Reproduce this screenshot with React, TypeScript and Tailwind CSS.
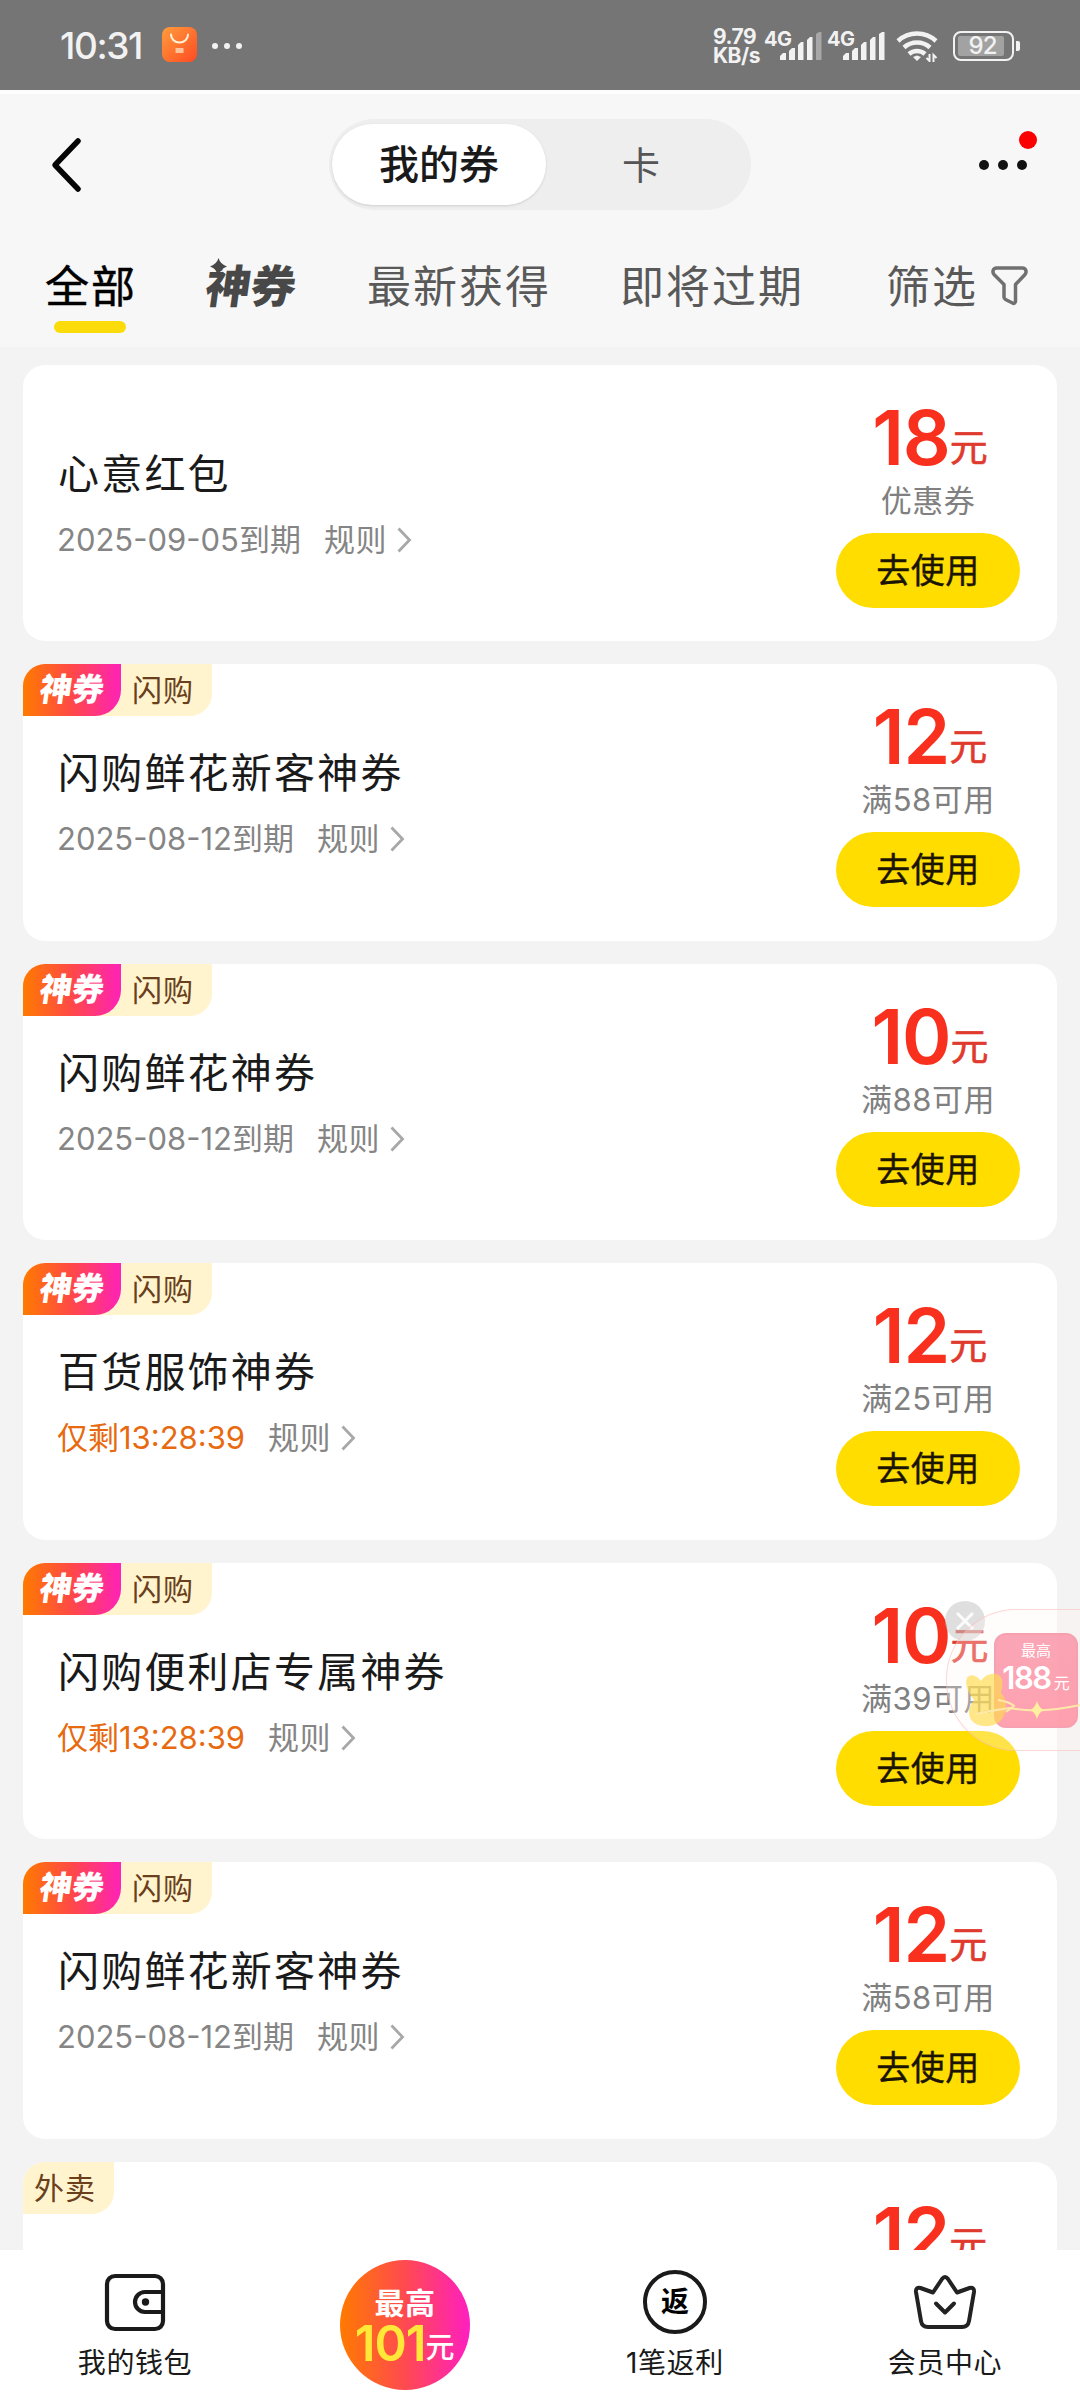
import clsx from 'clsx';

interface Coupon {
  title: string;
  expire: string;
  urgent?: boolean;
  amount: number;
  condition: string;
  god?: boolean;
  tag?: string;
}

const coupons: Coupon[] = [
  { title: '心意红包', expire: '2025-09-05到期', amount: 18, condition: '优惠券' },
  { title: '闪购鲜花新客神券', expire: '2025-08-12到期', amount: 12, condition: '满58可用', god: true, tag: '闪购' },
  { title: '闪购鲜花神券', expire: '2025-08-12到期', amount: 10, condition: '满88可用', god: true, tag: '闪购' },
  { title: '百货服饰神券', expire: '仅剩13:28:39', urgent: true, amount: 12, condition: '满25可用', god: true, tag: '闪购' },
  { title: '闪购便利店专属神券', expire: '仅剩13:28:39', urgent: true, amount: 10, condition: '满39可用', god: true, tag: '闪购' },
  { title: '闪购鲜花新客神券', expire: '2025-08-12到期', amount: 12, condition: '满58可用', god: true, tag: '闪购' },
  { title: '', expire: '', amount: 12, condition: '', tag: '外卖' },
];

function Signal({ weak = false }: { weak?: boolean }) {
  return (
    <svg width="42" height="28" viewBox="0 0 42 28" fill="#f2f2f2">
      <path d="M0 24l3-3h3v7H0z" />
      <path d="M9 19l3-3h3v12H9z" />
      <path d="M18 13l3-3h2.500v18H18z" />
      <path d="M27 8l3-3h2.500v23H27z" />
      <path d="M36 2l3-2h2.500v28H36z" opacity={weak ? 0.4 : 1} />
    </svg>
  );
}

function StatusBar() {
  return (
    <div className="flex h-[90px] flex-shrink-0 items-center bg-[#757575] px-[60px] pb-px text-[#f2f2f2]">
      <span className="w-[84px] pt-[2px] text-[37px] font-medium leading-none tracking-[-1.400px]">10:31</span>
      <svg className="ml-[18px]" width="35" height="35" viewBox="0 0 35 35">
        <defs>
          <linearGradient id="store" x1="0" y1="0" x2="1" y2="1">
            <stop offset="0" stopColor="#ff9d3c" />
            <stop offset="1" stopColor="#ff4a22" />
          </linearGradient>
        </defs>
        <rect width="35" height="35" rx="8" fill="url(#store)" />
        <path d="M9 7.500a8.500 8 0 0 0 17 0" fill="none" stroke="#fff0d8" strokeWidth="2" strokeLinecap="round" />
        <rect x="13.500" y="21" width="8" height="5" fill="#ffc39c" />
      </svg>
      <div className="ml-[15px] flex gap-[6px] pt-[2px]">
        <i className="size-[6px] rounded-full bg-[#f2f2f2]" />
        <i className="size-[6px] rounded-full bg-[#f2f2f2]" />
        <i className="size-[6px] rounded-full bg-[#f2f2f2]" />
      </div>

      <div className="ml-auto flex items-center pt-[2px]">
        <div className="w-[50px] text-[21px] font-bold leading-[19px] tracking-[-0.5px]">
          <p className="h-[19px]">9.79</p>
          <p className="h-[19px]">KB/s</p>
        </div>
        <div className="ml-px flex h-[32px]">
          <span className="w-[16px] text-[20px] font-bold leading-[18px] tracking-[-0.5px]">4G</span>
          <span className="mt-[2px]"><Signal weak /></span>
        </div>
        <div className="ml-[5px] flex h-[32px]">
          <span className="w-[16px] text-[20px] font-bold leading-[18px] tracking-[-0.5px]">4G</span>
          <span className="mt-[2px]"><Signal /></span>
        </div>
        <svg className="ml-[11px]" width="43" height="33" viewBox="0 0 43 33" fill="none" stroke="#f2f2f2" strokeWidth="4.500">
          <path d="M2 12a28 28 0 0 1 38 0" />
          <path d="M8 18.500a19.500 19.500 0 0 1 26 0" />
          <path d="M13 25a12 12 0 0 1 16 0" />
          <path d="M17 28l4-1.500 4 1.500-4 4z" fill="#f2f2f2" stroke="none" />
          <path d="M33.500 25v7l-3-3M37.500 33v-7l3 3" strokeWidth="2" />
        </svg>
        <div className="ml-[14px] flex items-center">
          <div className="flex h-[30px] w-[61px] items-center rounded-[8px] border-[2.500px] border-[#f2f2f2] p-[3px]">
            <span className="flex h-full w-[46px] items-center justify-center rounded-[2px] bg-[#a2a2a2] pl-[3px] text-[24px] font-medium leading-none tracking-[-1px]">92</span>
          </div>
          <i className="ml-[2px] h-[10px] w-[4px] rounded-r-[2px] bg-[#f2f2f2]" />
        </div>
      </div>
    </div>
  );
}

function Header() {
  return (
    <header className="flex h-[149px] items-center border-t-4 border-[#fdfdfd] pb-[4px] pl-[50px]">
      <svg width="34" height="56" viewBox="0 0 34 56" fill="none" stroke="#050505" strokeWidth="5.500" strokeLinecap="round" strokeLinejoin="round">
        <path d="M28 4L5 28l23 24" />
      </svg>
      <div className="ml-[245px] flex h-[91px] w-[422px] items-center rounded-full bg-[#eeeeee] pl-[3px]">
        <div className="flex h-[81px] w-[214px] items-center justify-center rounded-full bg-white text-[40px] font-medium leading-none text-[#1a1a1a] shadow-sm">
          我的券
        </div>
        <div className="ml-[76px] text-[38px] leading-none text-[#555]">卡</div>
      </div>
      <div className="relative ml-[228px] flex gap-[9px]">
        <i className="size-[10px] rounded-full bg-[#111]" />
        <i className="size-[10px] rounded-full bg-[#111]" />
        <i className="size-[10px] rounded-full bg-[#111]" />
        <i className="absolute -top-[29px] left-[40px] size-[18px] rounded-full bg-[#fb0000]" />
      </div>
    </header>
  );
}

// stylised coupon wordmark, shared by the tab and the card badge
function GodCoupon({ small = false }: { small?: boolean }) {
  return (
    <span className="relative inline-block">
      <span
        className={clsx(
          'inline-block -skew-x-8 font-black leading-none',
          small ? 'text-[32px] text-white' : 'text-[45px] text-[#484848]',
        )}
      >
        神券
      </span>
      <svg
        className={clsx('absolute', small ? '-top-[1px] left-[3px] size-[12px]' : '-top-[6px] left-[4px] size-[17px]')}
        viewBox="0 0 16 16"
        fill={small ? '#fff' : '#484848'}
      >
        <path d="M8 0q1.500 5.500 8 8-6.500 2.500-8 8-1.500-5.500-8-8 6.500-2.500 8-8z" />
      </svg>
    </span>
  );
}

function Tabs() {
  return (
    <nav className="flex h-[108px] pl-[45px] pt-[25px] text-[44px] leading-[46px] tracking-[2px] text-[#595959]">
      <div className="flex w-[90px] flex-col items-center text-black">
        <span className="whitespace-nowrap pl-[2px] [-webkit-text-stroke:0.5px]">全部</span>
        <i className="mt-[11px] h-[12px] w-[72px] rounded-full bg-[#fbdc0a]" />
      </div>
      <div className="ml-[71px] w-[92px] tracking-normal">
        <GodCoupon />
      </div>
      <div className="ml-[69px] w-[184px]">最新获得</div>
      <div className="ml-[69px] w-[184px]">即将过期</div>
      <div className="ml-[82px] flex">
        <span>筛选</span>
        <svg className="ml-[13px] mt-px" width="38" height="42" viewBox="0 0 38 42" fill="none" stroke="#707070" strokeWidth="3.500" strokeLinejoin="round">
          <path d="M5.500 3h26c3.500 0 4.500 4 2.500 6.500l-9.500 10V36c0 2-1.500 3-3 2l-7-3.500c-1-.500-1.500-1.500-1.500-2.500V19.500L3 9.500C1 7 2 3 5.500 3z" />
        </svg>
      </div>
    </nav>
  );
}

function CouponCard({ coupon }: { coupon: Coupon }) {
  const { title, expire, urgent, amount, condition, god, tag } = coupon;

  return (
    <div className="flex h-[276.500px] flex-shrink-0 overflow-hidden rounded-[22px] bg-white">
      <div className="flex-1">
        {/* Badges */}
        <div className="flex h-[52px]">
          {tag && (
            <div
              className={clsx(
                'flex h-[52px] items-center rounded-br-[22px] bg-[#fff4ce] text-[30px] leading-none tracking-[1px] text-[#6a401c]',
                god ? 'w-[189px]' : 'w-[91px] pl-[11px]',
              )}
            >
              {god && (
                <span className="mr-[11px] flex h-[52px] w-[98px] items-center justify-center rounded-br-[26px] bg-linear-to-r/srgb from-[#ff7a00] via-[#ff4848] to-[#ff22b8] tracking-normal">
                  <GodCoupon small />
                </span>
              )}
              {tag}
            </div>
          )}
        </div>

        <h3 className="ml-[35px] mt-[27px] text-[41px] leading-[60px] tracking-[2.200px] text-[#1a1a1a]">{title}</h3>
        {expire && (
          <div className="ml-[34px] mt-[16px] flex items-center text-[31px] leading-[40px] text-[#858585]">
            <span className={clsx(urgent ? 'tracking-normal text-[#e86a10]' : 'tracking-normal')}>{expire}</span>
            <span className="ml-[23px] tracking-[0.5px]">规则</span>
            <svg className="ml-[10px]" width="15" height="26" viewBox="0 0 15 26" fill="none" stroke="#a8a8a8" strokeWidth="2.800">
              <path d="M1.500 1.500L12.500 13l-11 11.500" />
            </svg>
          </div>
        )}
      </div>

      {/* Amount and action */}
      <div className="mr-[37px] flex w-[184px] flex-col items-center pt-[35px]">
        <div className="flex h-[75px] items-baseline whitespace-nowrap pl-[4px] text-[#f9301e]">
          <span className="text-[75px] font-semibold leading-[75px] tracking-[-1px]">{amount}</span>
          <span className="-translate-y-[4px] text-[38px] leading-none text-[#e03a2e] [-webkit-text-stroke:0.6px]">元</span>
        </div>
        <p className="mt-[8px] text-[31px] leading-[36px] tracking-[0.5px] text-[#808080]">{condition || '\u00a0'}</p>
        <button className="mt-[14px] h-[75px] w-[184px] rounded-full bg-[#ffdd00] pt-px text-[34px] leading-none tracking-[0.500px] text-[#1a1400] [-webkit-text-stroke:0.4px]">
          去使用
        </button>
      </div>
    </div>
  );
}

function FloatingPromo() {
  return (
    <div className="absolute right-0 top-[1600px] h-[152px] w-[134px]">
      <svg className="absolute -left-px top-0" width="40" height="42" viewBox="0 0 40 42">
        <circle cx="20" cy="21" r="20" fill="#c4c4c4" opacity="0.55" />
        <path d="M12 13l16 16M28 13L12 29" stroke="#fff" strokeWidth="3" opacity="0.9" />
      </svg>
      <div className="absolute left-0 top-[9px] h-[142px] w-[134px] rounded-l-[70px] border border-r-0 border-[#f5b5b0]/50 bg-[#fff5f3]/30" />
      <div className="absolute left-[48px] top-[33px] flex h-[95px] w-[84px] flex-col items-center rounded-[12px] border-2 border-[#f4a0b0]/60 bg-linear-to-b/srgb from-[#f98fa4]/80 to-[#ff8a9c]/80 pt-[7px] text-white">
        <span className="text-[15px] leading-[18px]">最高</span>
        <span className="mt-[2px] flex items-baseline whitespace-nowrap">
          <span className="text-[31px] font-semibold leading-[32px] tracking-[-1.500px]">188</span>
          <span className="ml-[3px] text-[16px] leading-none">元</span>
        </span>
      </div>
      <svg className="absolute left-[18px] top-[70px]" width="116" height="60" viewBox="0 0 116 60">
        <path
          d="M3 8c3-5 10-3 14 3 3-6 14-10 19-5 4 5 2 12 1 17 5 5 6 13 4 20-3 10-12 14-21 13C9 55 5 49 5 42c0-5 3-9 5-12C5 24 0 14 3 8z"
          fill="#ffdc4a"
          opacity="0.65"
        />
        <path d="M12 44q18-4 34-6 30 6 70-3M34 30q12 2 16 6l-8 6" fill="none" stroke="#ffe9a8" strokeWidth="2" />
        <path d="M73 31q2 7 7 9-5 2-7 9-2-7-7-9 5-2 7-9z" fill="#fff0a0" />
      </svg>
    </div>
  );
}

function BottomNav() {
  return (
    <div className="absolute inset-x-0 bottom-0 grid h-[150px] grid-cols-4 bg-white text-[28px] leading-[36px] tracking-[0.6px] text-[#1a1a1a]">
      <div className="flex flex-col items-center pt-[20px]">
        <svg width="64" height="64" viewBox="0 0 64 64" fill="none" stroke="#1a1a1a" strokeWidth="4.200">
          <rect x="4" y="6" width="56" height="53" rx="8" />
          <path d="M60 22H42a10 10 0 0 0 0 20h18" />
          <circle cx="42.500" cy="32" r="3.700" fill="#1a1a1a" stroke="none" />
        </svg>
        <span className="mt-[11px]">我的钱包</span>
      </div>
      <div className="flex justify-center pt-[10px]">
        <div className="flex size-[130px] flex-col items-center rounded-full bg-linear-to-r/srgb from-[#ff7a00] via-[#ff4a50] to-[#ff1fc0] pt-[27px] text-white">
          <span className="text-[30px] font-bold leading-[32px]">最高</span>
          <span className="mt-[2px] flex h-[46px] items-baseline whitespace-nowrap">
            <span className="text-[49px] font-semibold leading-[46px] tracking-[-1px] text-[#ffe838]">101</span>
            <span className="-translate-y-[3px] text-[29px] font-medium leading-none">元</span>
          </span>
        </div>
      </div>
      <div className="flex flex-col items-center pt-[20px]">
        <div className="flex size-[64px] items-center justify-center rounded-full border-[4px] border-[#1a1a1a] text-[28px] font-bold leading-none tracking-normal text-black">
          返
        </div>
        <span className="mt-[11px]">1笔返利</span>
      </div>
      <div className="flex flex-col items-center pt-[20px]">
        <svg width="64" height="64" viewBox="0 0 64 64" fill="none" stroke="#222" strokeWidth="4" strokeLinejoin="round" strokeLinecap="round">
          <path d="M20 22.500L29 9q3-4 6 0l9 13.500 12.500-4.500q5-1 4.500 4l-5 29q-1 6-7 6H15q-6 0-7-6L3 22q-.500-5 4.500-4z" />
          <path d="M23 33.500l9 9 9-9" />
        </svg>
        <span className="mt-[11px]">会员中心</span>
      </div>
    </div>
  );
}

export default function App() {
  return (
    <div className="relative flex h-[2400px] w-[1080px] flex-col overflow-hidden bg-[#f3f3f3] font-['Inter','Noto_Sans_CJK_SC',sans-serif]">
      <StatusBar />
      <div className="h-[257px] flex-shrink-0 bg-[#f7f7f7]">
        <Header />
        <Tabs />
      </div>
      <div className="flex flex-col gap-[23px] px-[23px] pt-[17.500px]">
        {coupons.map((coupon, i) => (
          <CouponCard key={i} coupon={coupon} />
        ))}
      </div>
      <FloatingPromo />
      <BottomNav />
    </div>
  );
}
